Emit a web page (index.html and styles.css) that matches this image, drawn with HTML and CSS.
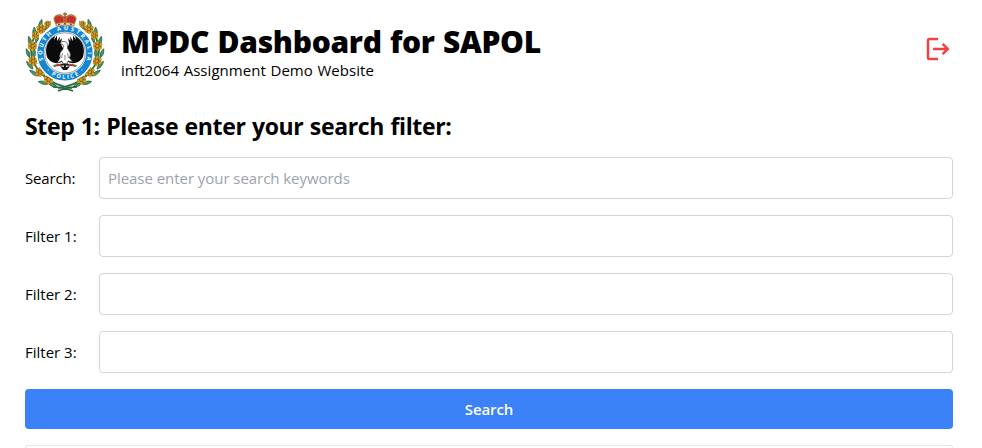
FILE: index.html
```html
<!DOCTYPE html>
<html lang="en">
<head>
<meta charset="utf-8">
<title>MPDC Dashboard for SAPOL</title>
<link rel="stylesheet" href="styles.css">
</head>
<body>
<main class="page">
  <header class="header">
    <svg class="crest" viewBox="0 0 80 80" role="img" aria-label="South Australia Police">
      <defs>
        <g id="flower">
          <circle r="4.2" fill="#6b5a1c"/>
          <g fill="#d9991c"><circle cx="-3.2" cy="-1.8" r="1.5"/><circle cx="0" cy="-3.4" r="1.5"/><circle cx="3.2" cy="-1.6" r="1.5"/><circle cx="-3" cy="1.8" r="1.5"/><circle cx="0.2" cy="0" r="1.5"/><circle cx="3" cy="2" r="1.5"/><circle cx="0" cy="3.5" r="1.5"/></g>
        </g>
        <path id="leaf" d="M0 0Q-3.4-4-1-10Q2.6-5 0 0Z" fill="#4a9560" stroke="#1f5c3c" stroke-width=".7"/>
        <g id="branch">
          <path d="M47 76Q30 74 19 64Q7 54 6 39Q6 25 18 13" fill="none" stroke="#2b7448" stroke-width="1.8"/>
          <use href="#leaf" transform="translate(20 18) rotate(38)"/>
          <use href="#leaf" transform="translate(14 17) rotate(22)"/>
          <use href="#leaf" transform="translate(9 25) rotate(8)"/>
          <use href="#leaf" transform="translate(6 34) rotate(-8)"/>
          <use href="#leaf" transform="translate(11 31) rotate(18)"/>
          <use href="#leaf" transform="translate(5 46) rotate(-16)"/>
          <use href="#leaf" transform="translate(9 46) rotate(5)"/>
          <use href="#leaf" transform="translate(8 57) rotate(-35)"/>
          <use href="#leaf" transform="translate(13 64) rotate(-50)"/>
          <use href="#leaf" transform="translate(20 65) rotate(-30)"/>
          <use href="#leaf" transform="translate(23 72) rotate(-70)"/>
          <use href="#leaf" transform="translate(32 75) rotate(-60)"/>
          <use href="#flower" transform="translate(22.5 12) scale(.7)"/>
          <use href="#flower" transform="translate(16 17)"/>
          <use href="#flower" transform="translate(10.5 23.5) scale(.8)"/>
          <use href="#flower" transform="translate(7.5 34)"/>
          <use href="#flower" transform="translate(8 49)"/>
          <use href="#flower" transform="translate(15 60)"/>
          <use href="#flower" transform="translate(23.5 67.5)"/>
        </g>
        <path id="ring-top" d="M20.3 52.4A22.8 22.8 0 1 1 59.7 52.4"/>
        <path id="ring-bottom" d="M18.2 55A26 26 0 0 0 61.8 55"/>
      </defs>
      <use href="#branch"/>
      <use href="#branch" transform="matrix(-1 0 0 1 80 0)"/>
      <path d="M28 75Q38 75 48 79M52 75Q42 75 33 79" fill="none" stroke="#286a40" stroke-width="1.6"/>
      <circle cx="40" cy="41" r="29" fill="#fff"/>
      <circle cx="40" cy="41" r="24.4" fill="none" stroke="#1686d2" stroke-width="6.4"/>
      <circle cx="40" cy="41" r="20.2" fill="#fff" stroke="#4a5158" stroke-width=".6"/>
      <text class="ring-text"><textPath href="#ring-top" startOffset="50%" text-anchor="middle" textLength="86">SOUTH AUSTRALIA</textPath></text>
      <text class="ring-text"><textPath href="#ring-bottom" startOffset="50%" text-anchor="middle" textLength="42">· POLICE ·</textPath></text>
      <path fill="#0b0b0b" d="M39 48C34 53 27 52 22.5 46C19 38 22 28 30 24L29 28L32 23.5L32 29L35 24.5L34.5 29L37 26L36 31C36 34 39 36 39 40Z"/>
      <path fill="#0b0b0b" d="M41 48C46 53 53 52 57.5 46C61 38 58 28 50 24L51 28L48 23.5L48 29L45 24.5L45.5 29L43 26L44 31C44 34 41 36 41 40Z"/>
      <path d="M35 31.5Q36.5 28.5 40 29.5Q43 30.5 42.5 34Q42 36 43.5 38Q47 42 44.5 46L48 50L43 49L42 52H38L37 49L32 51L35 46Q33.5 41 38 37Q39 34 38 32.5Z" fill="#fff" stroke="#222" stroke-width=".6"/>
      <path d="M37.5 41L36.5 46M42.5 41L43.5 46M40 43V48" stroke="#555" stroke-width=".7"/>
      <path d="M29 54Q40 51 51 54" fill="none" stroke="#202020" stroke-width="1.8"/>
      <path d="M31 53.3L36 52.6M44 52.6L49 53.3" stroke="#d43c35" stroke-width="1.5"/>
      <path d="M28.5 54L31 53.3M49 53.3L51.5 54" stroke="#278953" stroke-width="1.5"/>
      <path d="M35 54L38 58H42L45 54L41 55V53H39V55Z" fill="#161616"/>
      <path d="M31 12L29 6Q31 2 36 3L39 5H41L44 3Q49 2 51 6L49 12Z" fill="#c62d2d" stroke="#7e3420" stroke-width=".7"/>
      <path d="M31 12Q27 6 31 4Q36 2 39 6V12M49 12Q53 6 49 4Q44 2 41 6V12" fill="none" stroke="#b98535" stroke-width="1.1"/>
      <path d="M40 .5V5M38 2H42" stroke="#8f6430" stroke-width="1.5"/>
      <path d="M31 11.5Q40 9 49 11.5V14Q40 12 31 14Z" fill="#e9d5a4" stroke="#97632b" stroke-width=".7"/>
      <path d="M33 12.4H35M39 11.8H41M45 12.4H47" stroke="#b93735" stroke-width="1.4"/>
    </svg>
    <div class="heading">
      <h1 class="title">MPDC Dashboard for SAPOL</h1>
      <p class="subtitle">inft2064 Assignment Demo Website</p>
    </div>
    <button class="logout" type="button" aria-label="Log out">
      <svg viewBox="0 0 32 32" width="32" height="32" fill="none" stroke="#ef4444" stroke-width="2.5"><path d="M17 6H8.6Q7 6 7 7.6V24.4Q7 26 8.6 26H17M12 16H27M21.6 10.8L26.8 16L21.6 21.2"/></svg>
    </button>
  </header>
  <h2 class="step">Step 1: Please enter your search filter:</h2>
  <form class="filters">
    <label class="row"><span class="label search-label">Search:</span><input class="field" type="text" placeholder="Please enter your search keywords"></label>
    <label class="row"><span class="label">Filter 1:</span><input class="field" type="text"></label>
    <label class="row"><span class="label">Filter 2:</span><input class="field" type="text"></label>
    <label class="row"><span class="label">Filter 3:</span><input class="field" type="text"></label>
    <button class="submit" type="button">Search</button>
  </form>
  <section class="results"></section>
</main>
</body>
</html>
```
FILE: styles.css
```css
* { box-sizing: border-box; }
body {
  margin: 0;
  background: #fff;
  color: #000;
  font-family: "Open Sans", "Noto Sans", sans-serif;
  font-size: 15px;
}
.page { padding: 12px 29px 0 25px; }
.header { display: flex; height: 80px; align-items: center; gap: 16px; }
.crest { width: 80px; height: 80px; flex: none; }
.ring-text { font: bold 5.6px "Open Sans", sans-serif; fill: #fff; }
.heading { flex: 1; white-space: nowrap; }
.title { margin: 0; padding-top: 2px; font-size: 30px; line-height: 36px; font-weight: 800; letter-spacing: -0.3px; word-spacing: 0.8px; }
.subtitle { margin: -1px 0 0; line-height: 23px; letter-spacing: 0.05px; word-spacing: 0.6px; }
.logout { display: flex; padding: 0; border: 0; background: none; margin-top: -6px; }
.step { margin: 18px 0 14px; font-size: 23px; line-height: 33px; font-weight: 700; letter-spacing: -0.35px; word-spacing: 0.8px; white-space: nowrap; }
.filters { display: flex; flex-direction: column; gap: 16px; }
.row { display: flex; align-items: center; }
.label { width: 74px; flex: none; letter-spacing: 0; }
.search-label { letter-spacing: -0.15px; }
.field {
  flex: 1;
  min-width: 0;
  height: 42px;
  padding: 0 8px;
  border: 1px solid #d1d5db;
  border-radius: 4px;
  background: #fff;
  font: inherit;
  letter-spacing: -0.05px;
}
.field::placeholder { color: #9ca3af; opacity: 1; }
.submit { height: 40px; padding: 0; border: 0; border-radius: 4px; background: #3b82f6; color: #fff; font: 600 15px "Open Sans", sans-serif; letter-spacing: -0.1px; }
.results { height: 3px; margin-top: 16px; border: 1px solid #e5e7eb; border-bottom: 0; border-radius: 4px 4px 0 0; }
```
